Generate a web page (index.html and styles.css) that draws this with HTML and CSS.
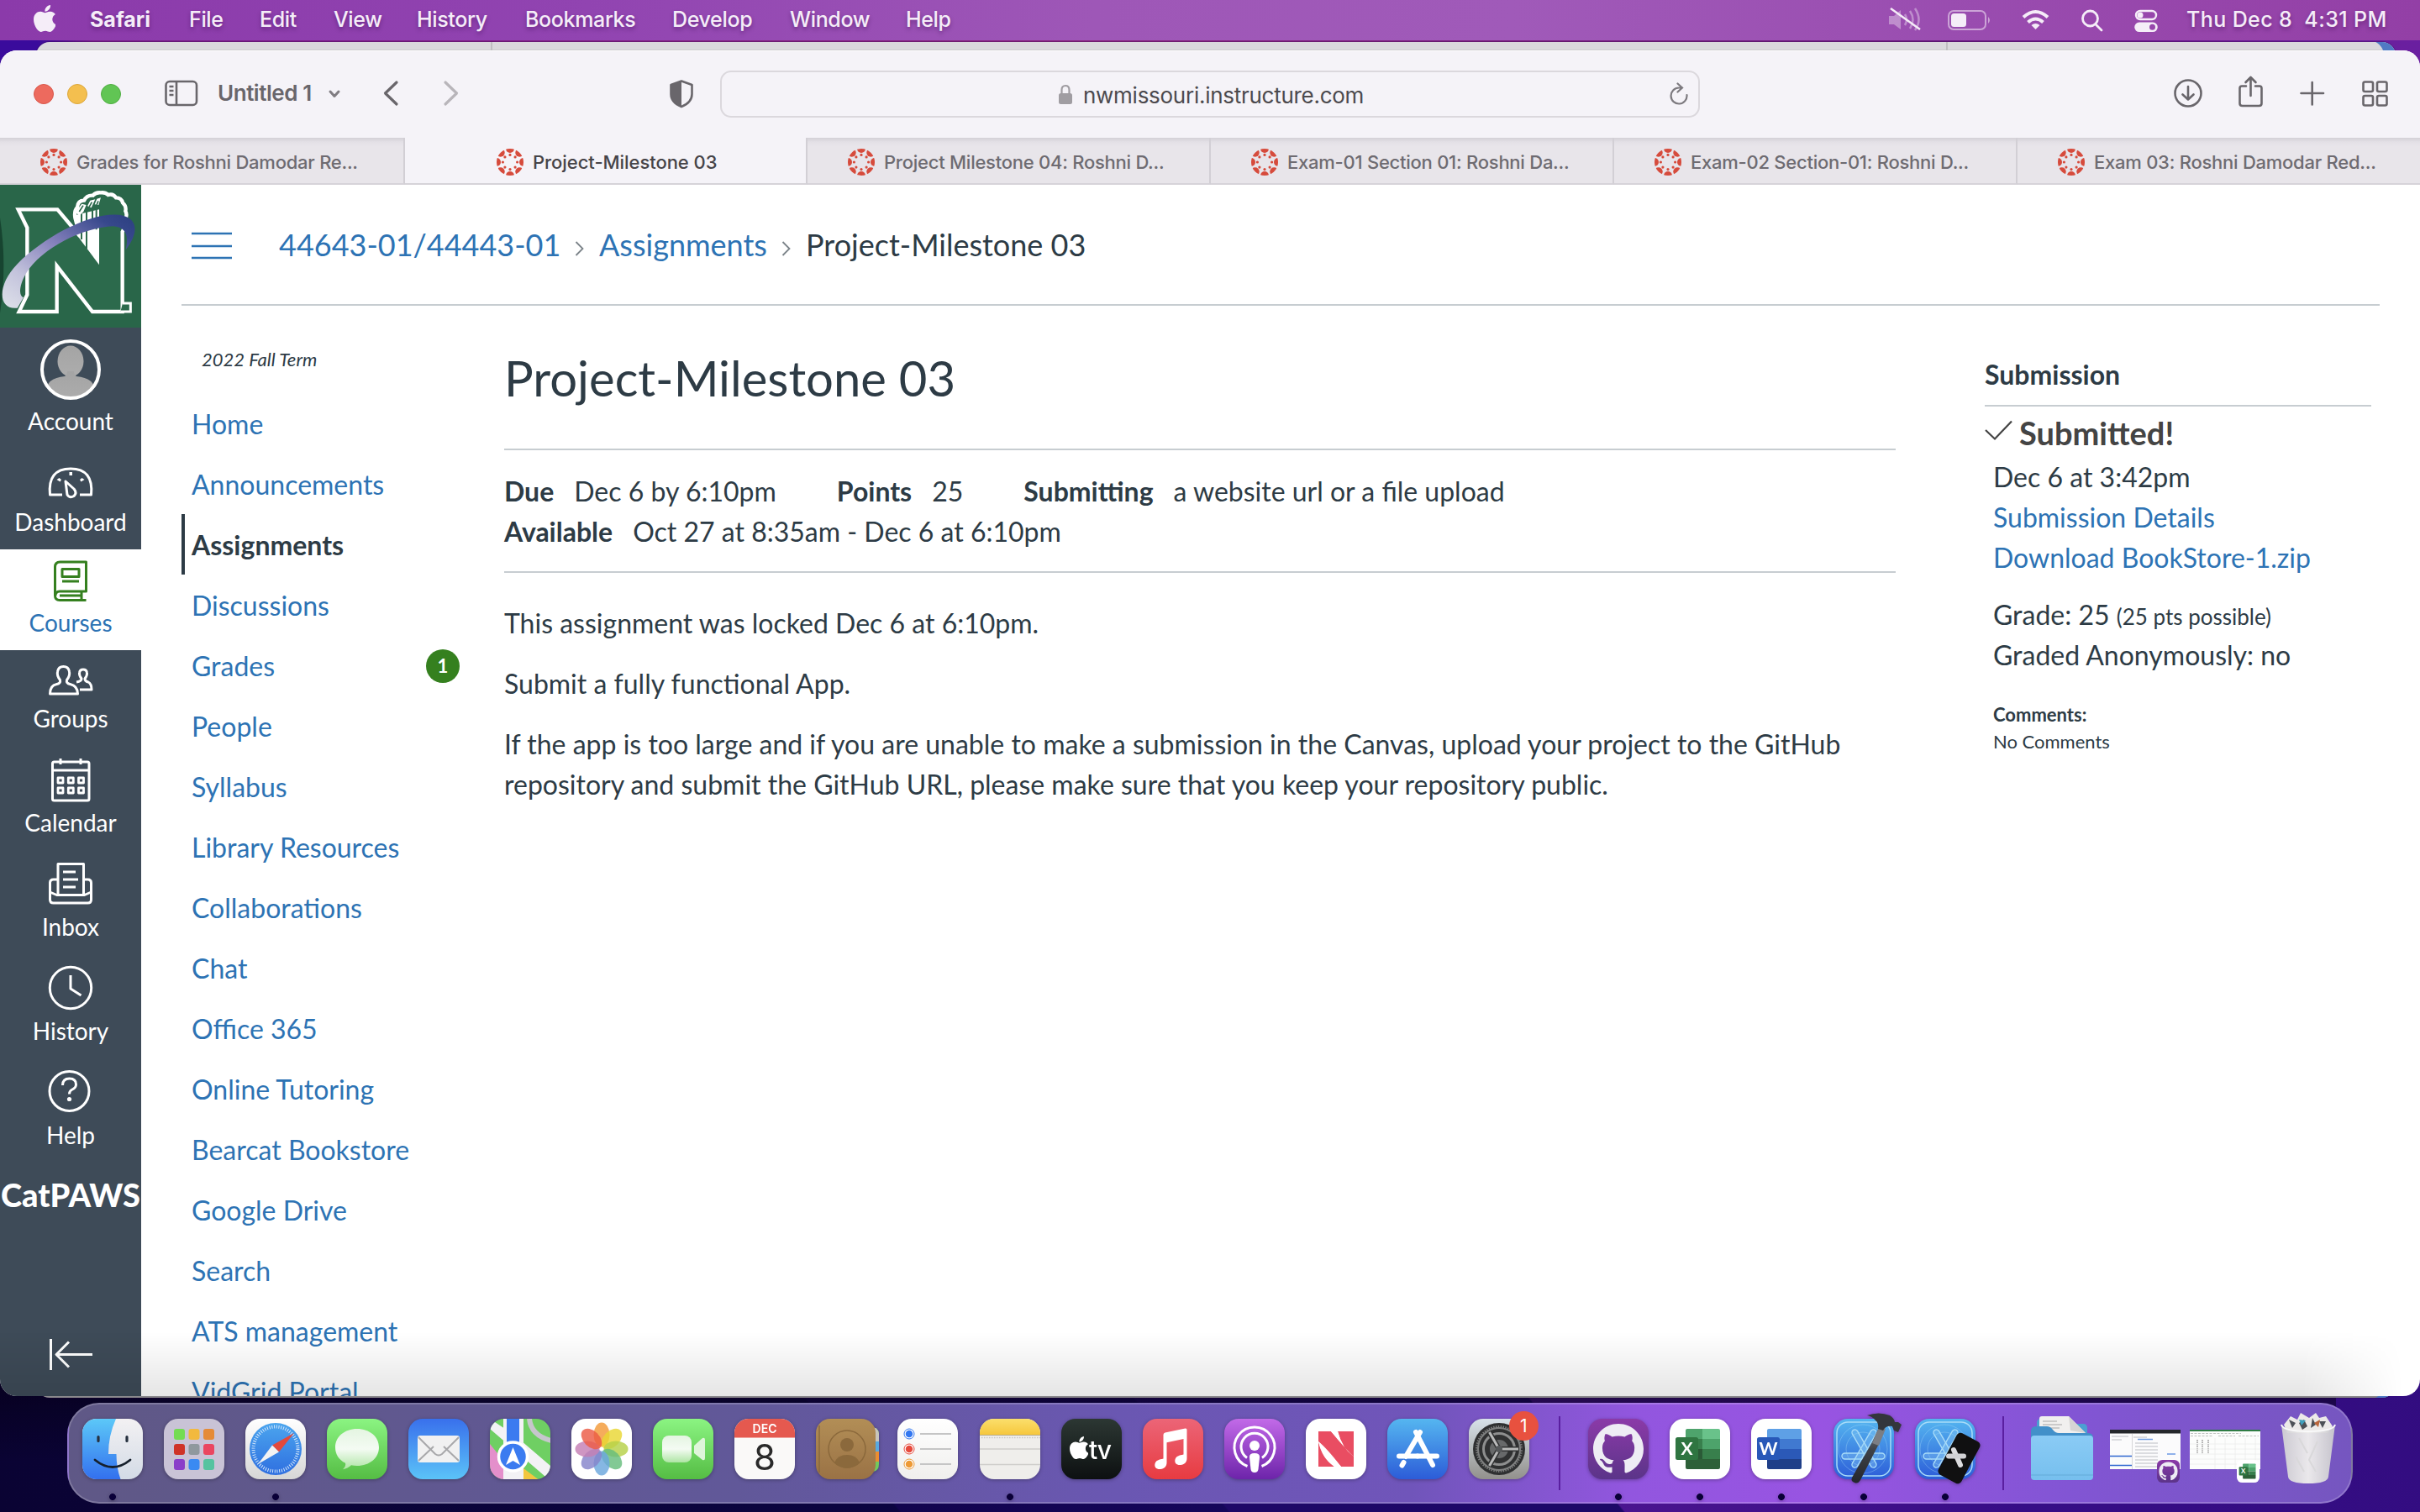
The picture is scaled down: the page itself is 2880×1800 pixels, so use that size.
FILE: index.html
```html
<!DOCTYPE html>
<html lang="en">
<head>
<meta charset="utf-8">
<title>Project-Milestone 03</title>
<link rel="stylesheet" href="styles.css">
</head>
<body>
<svg class="defs" width="0" height="0" aria-hidden="true">
  <defs>
    <linearGradient id="gSwoosh" x1="0" y1="1" x2="1" y2="0"><stop offset="0" stop-color="#dfe2ea"/><stop offset=".25" stop-color="#c3c3dc"/><stop offset=".55" stop-color="#8480bb"/><stop offset=".85" stop-color="#37488c"/><stop offset="1" stop-color="#2b3f80"/></linearGradient>
    <linearGradient id="gFinder" x2="0" y2="1"><stop offset="0" stop-color="#5cc8f8"/><stop offset="1" stop-color="#3370ee"/></linearGradient>
    <linearGradient id="gFinder2" x2="0" y2="1"><stop offset="0" stop-color="#f3f1f3"/><stop offset="1" stop-color="#d3dbe6"/></linearGradient>
    <linearGradient id="gWhite" x2="0" y2="1"><stop offset="0" stop-color="#fff"/><stop offset="1" stop-color="#d6d6d6"/></linearGradient>
    <linearGradient id="gPaper" x2="0" y2="1"><stop offset="0" stop-color="#fff"/><stop offset="1" stop-color="#f0efed"/></linearGradient>
    <linearGradient id="gSafari" x2="0" y2="1"><stop offset="0" stop-color="#4ba5ee"/><stop offset="1" stop-color="#2f6fe0"/></linearGradient>
    <linearGradient id="gGreen" x2="0" y2="1"><stop offset="0" stop-color="#8bf482"/><stop offset="1" stop-color="#55bd44"/></linearGradient>
    <linearGradient id="gBubble" x2="0" y2="1"><stop offset="0" stop-color="#e4f5e1"/><stop offset=".5" stop-color="#f4fbf3"/><stop offset="1" stop-color="#aee5a4"/></linearGradient>
    <linearGradient id="gMail" x2="0" y2="1"><stop offset="0" stop-color="#3970ec"/><stop offset="1" stop-color="#5bc3f8"/></linearGradient>
    <linearGradient id="gRed" x2="0" y2="1"><stop offset="0" stop-color="#ec6577"/><stop offset="1" stop-color="#e73b41"/></linearGradient>
    <linearGradient id="gPod" x2="0" y2="1"><stop offset="0" stop-color="#c26ae8"/><stop offset="1" stop-color="#6d24aa"/></linearGradient>
    <linearGradient id="gStore" x2="0" y2="1"><stop offset="0" stop-color="#55b6f0"/><stop offset="1" stop-color="#2c5cd8"/></linearGradient>
    <linearGradient id="gTv" x2="0" y2="1"><stop offset="0" stop-color="#2c3733"/><stop offset="1" stop-color="#0d1011"/></linearGradient>
    <linearGradient id="gContacts" x2="0" y2="1"><stop offset="0" stop-color="#b28e56"/><stop offset="1" stop-color="#9a7245"/></linearGradient>
    <linearGradient id="gYellow" x2="0" y2="1"><stop offset="0" stop-color="#fbdf6c"/><stop offset="1" stop-color="#f6c73d"/></linearGradient>
    <linearGradient id="gSettings" x2="0" y2="1"><stop offset="0" stop-color="#d8e2ea"/><stop offset="1" stop-color="#92908c"/></linearGradient>
    <linearGradient id="gGit" x2="0" y2="1"><stop offset="0" stop-color="#8b3aa8"/><stop offset="1" stop-color="#5b3489"/></linearGradient>
    <linearGradient id="gFolder" x2="0" y2="1"><stop offset="0" stop-color="#8acbf5"/><stop offset="1" stop-color="#76bfee"/></linearGradient>
    <linearGradient id="gTrash" x2="1" y2="0"><stop offset="0" stop-color="#cfced2"/><stop offset=".5" stop-color="#efeeed"/><stop offset="1" stop-color="#c9c8cd"/></linearGradient>
    <linearGradient id="gAvatar" x2="0" y2="1"><stop offset="0" stop-color="#a4a4a4"/><stop offset="1" stop-color="#adadad"/></linearGradient>
    <linearGradient id="gHandle" x2="0" y2="1"><stop offset="0" stop-color="#777a80"/><stop offset=".4" stop-color="#3f4248"/><stop offset="1" stop-color="#24262c"/></linearGradient>
    <clipPath id="cIcon"><rect width="72" height="72" rx="17"/></clipPath>
    <clipPath id="cFav"><circle cx="16" cy="16" r="16"/></clipPath>
    <clipPath id="cAvatar"><circle cx="84" cy="440" r="33"/></clipPath>
    <symbol id="favicon" viewBox="0 0 32 32">
      <g fill="#d64b3c" clip-path="url(#cFav)">
        <circle cx="16" cy="0" r="5"/><circle cx="16" cy="32" r="5"/><circle cx="0" cy="16" r="5"/><circle cx="32" cy="16" r="5"/>
        <circle cx="4.700" cy="4.700" r="5"/><circle cx="27.300" cy="4.700" r="5"/><circle cx="4.700" cy="27.300" r="5"/><circle cx="27.300" cy="27.300" r="5"/>
        <circle cx="16" cy="7.400" r="1.600"/><circle cx="16" cy="24.600" r="1.600"/><circle cx="7.400" cy="16" r="1.600"/><circle cx="24.600" cy="16" r="1.600"/>
        <circle cx="9.900" cy="9.900" r="1.600"/><circle cx="22.100" cy="9.900" r="1.600"/><circle cx="9.900" cy="22.100" r="1.600"/><circle cx="22.100" cy="22.100" r="1.600"/>
      </g>
    </symbol>
    <symbol id="apple" viewBox="4 32 366 448"><path d="M318.7 268.7c-.2-36.7 16.4-64.4 50-84.8-18.8-26.9-47.2-41.7-84.7-44.6-35.5-2.8-74.3 20.7-88.5 20.7-15 0-49.4-19.7-76.4-19.7C63.3 141.2 4 184.8 4 273.5q0 39.3 14.4 81.2c12.8 36.7 59 126.7 107.2 125.2 25.2-.6 43-17.9 75.8-17.9 31.8 0 48.3 17.9 76.4 17.9 48.6-.7 90.4-82.5 102.6-119.3-65.2-30.7-61.7-90-61.7-91.9zm-56.6-164.2c27.3-32.4 24.8-61.9 24-72.5-24.1 1.4-52 16.4-67.9 34.9-17.5 19.8-27.8 44.3-25.6 71.9 26.1 2 49.9-11.4 69.5-34.3z"/></symbol>
    <symbol id="octocat" viewBox="0 0 16 16"><path d="M8 0C3.58 0 0 3.58 0 8c0 3.54 2.29 6.53 5.47 7.59.4.07.55-.17.55-.38 0-.19-.01-.82-.01-1.49-2.01.37-2.53-.49-2.69-.94-.09-.23-.48-.94-.82-1.13-.28-.15-.68-.52-.01-.53.63-.01 1.08.58 1.23.82.72 1.21 1.87.87 2.33.66.07-.52.28-.87.51-1.07-1.78-.2-3.64-.89-3.64-3.95 0-.87.31-1.59.82-2.15-.08-.2-.36-1.02.08-2.12 0 0 .67-.21 2.2.82.64-.18 1.32-.27 2-.27s1.36.09 2 .27c1.53-1.04 2.2-.82 2.2-.82.44 1.1.16 1.92.08 2.12.51.56.82 1.27.82 2.15 0 3.07-1.87 3.75-3.65 3.95.29.25.54.73.54 1.48 0 1.07-.01 1.93-.01 2.2 0 .21.15.46.55.38A8.01 8.01 0 0 0 16 8c0-4.42-3.58-8-8-8z"/></symbol>
    <symbol id="github" viewBox="0 0 72 72"><rect width="72" height="72" rx="17" fill="url(#gGit)"/><use href="#octocat" x="6" y="6" width="60" height="60" fill="#eeecf4"/></symbol>
    <symbol id="excel" viewBox="0 0 72 72"><rect width="72" height="72" rx="17" fill="#fff"/><path d="M19 14q0-2 2-2h18v12H19z" fill="#4ea36c"/><path d="M39 12h19q2 0 2 2v10H39z" fill="#69c28a"/><path d="M19 24h20v12H19z" fill="#387f4c"/><path d="M39 24h21v12H39z" fill="#4da36b"/><path d="M19 36h20v12H19z" fill="#2b5a37"/><path d="M39 36h21v12H39z" fill="#387f4c"/><path d="M19 48h41v10q0 2-2 2H21q-2 0-2-2z" fill="#2d6038"/><rect x="7" y="22" width="27" height="27" rx="2.500" fill="#2f7541"/><text x="20.500" y="43" class="office-letter">X</text></symbol>
    <symbol id="bp" viewBox="0 0 72 72"><rect width="72" height="72" rx="17" fill="url(#gStore)"/><g fill="none" stroke="#a9dcf8"><rect x="4" y="4" width="64" height="64" rx="13" stroke-width="1.500"/><circle cx="35" cy="36" r="29" stroke-opacity=".35"/><circle cx="35" cy="36" r="20" stroke-opacity=".35"/><g stroke-width="1.400" fill="#8fcdf5" fill-opacity=".35"><rect x="10" y="41" width="51" height="7" rx="3.500"/><rect x="33" y="10" width="7" height="51" rx="3.500" transform="rotate(30 36.500 35.500)"/><rect x="33" y="10" width="7" height="51" rx="3.500" transform="rotate(-30 36.500 35.500)"/></g></g></symbol>
  </defs>
</svg>

<div class="desktop">
  <header class="menubar">
    <svg class="apple-logo" fill="#f5edf8"><use href="#apple"/></svg>
    <nav class="menus"><b>Safari</b><span>File</span><span>Edit</span><span>View</span><span>History</span><span>Bookmarks</span><span>Develop</span><span>Window</span><span>Help</span></nav>
    <svg class="status" viewBox="2240 0 340 48" width="340" height="48" fill="#f5edf8">
      <g opacity=".4"><path d="M2248 19h6l8-7v23l-8-6h-6z"/><path d="M2267 17q4 6.500 0 13M2273 13q7 10.500 0 21M2279 10q9 13.500 0 26" fill="none" stroke="#f5edf8" stroke-width="2.500"/></g>
      <path d="M2250 10l35 25" stroke="#f5edf8" stroke-width="2.500"/>
      <rect x="2319" y="13" width="44" height="22" rx="6" fill="none" stroke="#f5edf8" stroke-opacity=".55" stroke-width="2"/><rect x="2322" y="16" width="18" height="16" rx="3.500"/><path d="M2366 20q4 4 0 8z" opacity=".55"/>
      <path d="M2408 20.500q14.500-13 29 0M2413.500 26.500q9-8 18 0" fill="none" stroke="#f5edf8" stroke-width="4"/><path d="M2422.500 35l-5-5q5-4 10 0z"/>
      <g fill="none" stroke="#f5edf8" stroke-width="2.800"><circle cx="2487.500" cy="22" r="9"/><path d="M2494 29l7 7" stroke-linecap="round"/><rect x="2542" y="13" width="24" height="10" rx="5" stroke-width="2.400"/></g>
      <circle cx="2547" cy="18" r="3.500"/><path d="M2546 26.500h16a5.800 5.800 0 0 1 0 11.600h-16a5.800 5.800 0 0 1 0-11.600zm15.500 2.300a3.500 3.500 0 1 0 0 7 3.500 3.500 0 0 0 0-7z" fill-rule="evenodd"/>
    </svg>
    <span class="clock">Thu Dec 8&nbsp; 4:31 PM</span>
  </header>

  <div class="back-window"><i></i></div>

  <main class="window">
    <div class="toolbar">
      <div class="lights"><i></i><i></i><i></i></div>
      <svg class="tb-side" viewBox="196 95 40 32" width="40" height="32" fill="none" stroke="#69666b" stroke-width="2.600"><rect x="197.500" y="97" width="36.500" height="28" rx="4.500"/><path d="M210 97v28M201.500 103h5M201.500 108h5M201.500 113h5"/></svg>
      <span class="profile">Untitled 1</span>
      <svg class="tb-chev" viewBox="388 104 20 14" width="20" height="14" fill="none" stroke="#807d82" stroke-width="3" stroke-linecap="round" stroke-linejoin="round"><path d="M393 108l5 5.500 5-5.500"/></svg>
      <svg class="tb-nav" viewBox="456 95 92 32" width="92" height="32" fill="none" stroke-width="3.200" stroke-linecap="round" stroke-linejoin="round"><path d="M472 98l-13.500 13L472 124" stroke="#69666b"/><path d="M530 98l13.500 13L530 124" stroke="#b8b5ba"/></svg>
      <svg class="tb-shield" viewBox="796 94 30 36" width="30" height="36"><path d="M811 96.500l12.500 4.500v11q0 10-12.500 15-12.500-5-12.500-15v-11z" fill="none" stroke="#69666b" stroke-width="2.600" stroke-linejoin="round"/><path d="M811 96v31q-12.500-5-12.500-15v-11z" fill="#69666b"/></svg>
      <div class="address">
        <svg viewBox="1260 101 16 25" width="16" height="25"><rect x="1260" y="112" width="16" height="13" rx="2.500" fill="#a09da2"/><path d="M1263.500 113v-5q0-5 4.500-5t4.500 5v5" fill="none" stroke="#a09da2" stroke-width="2.200"/></svg>
        <span>nwmissouri.instructure.com</span>
        <svg class="reload" viewBox="1986 97 26 28" width="26" height="28" fill="none" stroke="#7d7a7f" stroke-width="2.200" stroke-linecap="round"><path d="M2007.500 112a9.500 9.500 0 1 1-9.500-8.500h3M1996.500 98.500l5.500 5-5.500 5"/></svg>
      </div>
      <svg class="tb-right" viewBox="2584 88 262 42" width="262" height="42" fill="none" stroke="#69666b" stroke-width="2.600" stroke-linecap="round" stroke-linejoin="round"><circle cx="2604" cy="111" r="15.500"/><path d="M2604 103v15M2597.500 112.500l6.500 6 6.500-6"/><path d="M2673 102.500h-5q-2.500 0-2.500 2.500v18q0 3 3 3h20q3 0 3-3v-18q0-2.500-2.500-2.500h-5M2678.500 114V92.500M2672.500 98l6-6 6 6"/><path d="M2738.500 111h26.500M2751.700 98v26.500"/><rect x="2812.500" y="97.500" width="11.500" height="11.500" rx="2"/><rect x="2829" y="97.500" width="11.500" height="11.500" rx="2"/><rect x="2812.500" y="114" width="11.500" height="11.500" rx="2"/><rect x="2829" y="114" width="11.500" height="11.500" rx="2"/></svg>
    </div>

    <div class="tabs">
      <div class="tab"><svg><use href="#favicon"/></svg><span>Grades for Roshni Damodar Re...</span></div>
      <div class="tab active"><svg><use href="#favicon"/></svg><span>Project-Milestone 03</span></div>
      <div class="tab"><svg><use href="#favicon"/></svg><span>Project Milestone 04: Roshni D...</span></div>
      <div class="tab"><svg><use href="#favicon"/></svg><span>Exam-01 Section 01: Roshni Da...</span></div>
      <div class="tab"><svg><use href="#favicon"/></svg><span>Exam-02 Section-01: Roshni D...</span></div>
      <div class="tab"><svg><use href="#favicon"/></svg><span>Exam 03: Roshni Damodar Red...</span></div>
    </div>

    <div class="page">
      <aside class="global-nav">
        <svg class="school" viewBox="0 12 504 510" width="168" height="170">
          <rect y="12" width="504" height="510" fill="#296649"/>
          <path d="M0 130q26 170 0 340z" fill="#174430"/>
          <path d="M285 195L268 130q-4-26 8-38 2-24 24-24 10-20 32-18 10-12 28-10 16-2 26 8 18-6 28 10 20 0 24 18 14 12 10 30 8 16-2 30 4 24-9 44V465H330L203 302v163H68l29-60V165L65 100h140z" fill="#2c6a4c" stroke="#fff" stroke-width="13" stroke-linejoin="miter"/>
          <path d="M430 465h36v-30h-28" fill="#2c6a4c" stroke="#fff" stroke-width="9"/>
          <path d="M270 185V120l84-20v198z" fill="#fff"/><path d="M291 112v95M309 106v134M330 100v70M344 96v76" stroke="#2c6a4c" stroke-width="6"/>
          <path d="M270 112l8-14 14-18 16 4-10 24-14 14zM312 88l10-20 18-4-14 30zM338 82l8-20 14-4-8 26z" fill="#fff"/><path d="M283 108l14-22M318 92l10-18M345 84l6-14" stroke="#2c6a4c" stroke-width="5"/>
          <path d="M62 452C-8 460-12 370 62 295 160 195 340 100 440 122 496 138 492 190 449 244 458 200 456 165 405 160 300 164 150 235 92 330 68 372 66 410 84 414z" fill="url(#gSwoosh)"/>
        </svg>
        <a class="item account"><svg viewBox="0 390 168 93"><g clip-path="url(#cAvatar)" fill="url(#gAvatar)"><ellipse cx="84" cy="430" rx="15.500" ry="18.500"/><path d="M55 466q0-16 22-18 3-2 3-6h8q0 4 3 6 22 2 22 18v12H55z"/></g><circle cx="84" cy="440" r="34" fill="none" stroke="#fff" stroke-width="4"/></svg><span>Account</span></a>
        <a class="item dash"><svg viewBox="0 534 168 69"><g class="line"><path d="M74 589H59.500q-3-31 24.500-31t24.500 31H95M78 573l10 9q4 5 0 8.500-5 3-8-1.500z"/></g><path d="M82.500 562h3.500v4h-3.500zM67.500 571l3-2 2.500 2-1.500 2.500zM100.500 571l-3-2-2.500 2 1.500 2.500z" fill="#fff"/></svg><span>Dashboard</span></a>
        <a class="item dash current"><svg viewBox="0 654 168 69"><g class="line green"><path d="M97 704V714M102.500 714.500H71q-5.500 0-5.500-5.500v-34q0-6 6-6h31v35H71q-5 0-5 5M71 709h26"/><path d="M74 677.500h20v9H74zM74 692h20" /></g></svg><span>Courses</span></a>
        <a class="item groups"><svg viewBox="0 774 168 63"><g class="line"><path d="M59.500 826q0-10 8-11.500 5-1 4-5-4-5-3-10 1-6 7-6t7 6q1 5-3 10-1 4 4 5 9 2 9 11.500z"/><path d="M91 812q6-1 6-4-3-4-2.500-7 .5-4 4.500-4t4.500 4q.5 3-2.500 7 0 3 4 4 4 2 4 9H95"/></g></svg><span>Groups</span></a>
        <a class="item tall"><svg viewBox="0 888 168 73"><g class="line"><rect x="62.500" y="907" width="43.500" height="46" rx="2"/><path d="M62 917h44M72 903v7M96 903v7" /><g stroke-width="2.800"><path d="M69 926h6v6h-6zM81.300 926h6v6h-6zM93.500 926h6v6h-6zM69 938h6v6h-6zM81.300 938h6v6h-6zM93.500 938h6v6h-6z"/></g></g></svg><span>Calendar</span></a>
        <a class="item tall"><svg viewBox="0 1012 168 73"><g class="line"><path d="M68.500 1047h-5q-4 0-4 4v20q0 4 4 4h41q4 0 4-4v-20q0-4-4-4h-5M69 1065v-36.500h30.500V1065M59.500 1062l8 3.500h33l8-3.500M75 1038h15M75 1047h18M75 1056h15"/></g></svg><span>Inbox</span></a>
        <a class="item tall"><svg viewBox="0 1136 168 73"><g class="line"><circle cx="84" cy="1176" r="24.700"/><path d="M84 1161v16l12.500 8"/></g></svg><span>History</span></a>
        <a class="item tall"><svg viewBox="0 1260 168 73"><g class="line"><circle cx="82.500" cy="1299" r="23.500"/><path d="M74.500 1292q0-8 8-8t8 7q0 4-4.500 6-3.500 1.500-3.500 5.500"/></g><circle cx="82.500" cy="1308.500" r="2.600" fill="#fff"/></svg><span>Help</span></a>
        <svg class="catpaws" viewBox="0 1384 168 80" width="168" height="80"><text x="1" y="1437" textLength="166" lengthAdjust="spacingAndGlyphs">CatPAWS</text></svg>
        <svg class="collapse" viewBox="0 1580 168 82" width="168" height="82"><g class="line"><path d="M60.500 1594v37M110 1612.500H67M82 1597.500l-15 15 15 15"/></g></svg>
      </aside>

      <section class="content">
        <div class="crumbs">
          <svg viewBox="228 269 48 44" width="48" height="44" stroke="#2d73b4" stroke-width="2.600"><path d="M228 278h48M228 293h48M228 307h48"/></svg>
          <a class="c1">44643-01/44443-01</a><svg class="sep" viewBox="0 0 12 18" width="12" height="18"><path d="M1.500 1l8 8-8 8"/></svg>
          <a class="c2">Assignments</a><svg class="sep" viewBox="0 0 12 18" width="12" height="18"><path d="M1.500 1l8 8-8 8"/></svg>
          <span class="c3">Project-Milestone 03</span>
        </div>
        <div class="columns">
          <nav class="course-nav">
            <p>2022 Fall Term</p>
            <a>Home</a><a>Announcements</a><a class="on">Assignments</a><a>Discussions</a><a>Grades<em>1</em></a><a>People</a><a>Syllabus</a><a>Library Resources</a><a>Collaborations</a><a>Chat</a><a>Office 365</a><a>Online Tutoring</a><a>Bearcat Bookstore</a><a>Google Drive</a><a>Search</a><a>ATS management</a><a>VidGrid Portal</a>
          </nav>
          <article class="assignment">
            <h1>Project-Milestone 03</h1>
            <div class="meta">
              <div><b>Due</b><span>Dec 6 by 6:10pm</span><b>Points</b><span>25</span><b>Submitting</b><span>a website url or a file upload</span></div>
              <div><b>Available</b><span>Oct 27 at 8:35am - Dec 6 at 6:10pm</span></div>
            </div>
            <p>This assignment was locked Dec 6 at 6:10pm.</p>
            <p>Submit a fully functional App.</p>
            <p>If the app is too large and if you are unable to make a submission in the Canvas, upload your project to the GitHub<br>repository and submit the GitHub URL, please make sure that you keep your repository public.</p>
          </article>
          <aside class="submission">
            <h2>Submission</h2>
            <div class="done"><svg viewBox="2362 498 34 28" width="34" height="28"><path d="M2363 512l11 10.500 20-21" fill="none" stroke="#444" stroke-width="2.200"/></svg>Submitted!</div>
            <div class="lines"><span>Dec 6 at 3:42pm</span><a>Submission Details</a><a>Download BookStore-1.zip</a></div>
            <div class="lines grade"><span>Grade: 25 <small>(25 pts possible)</small></span><span>Graded Anonymously: no</span></div>
            <div class="comments"><b>Comments:</b><span>No Comments</span></div>
          </aside>
        </div>
      </section>
    </div>
  </main>

  <footer class="dock">
    <svg class="ic run" viewBox="0 0 72 72"><g clip-path="url(#cIcon)"><rect width="72" height="72" fill="url(#gFinder2)"/><path d="M0 0h40q-9 20-9 42h9.500q0 16 5 30H0z" fill="url(#gFinder)"/></g><path d="M19 21.500v5M53 21.500v5" stroke="#26313f" stroke-width="3.200" stroke-linecap="round"/><path d="M15 49q21 17 42 0" fill="none" stroke="#16202c" stroke-width="2.800" stroke-linecap="round"/></svg>
    <svg class="ic" viewBox="0 0 72 72"><rect width="72" height="72" rx="17" fill="#c9c3d6"/><g><rect x="12" y="12" width="13" height="13" rx="3" fill="#74dc53"/><rect x="29.500" y="12" width="13" height="13" rx="3" fill="#f2b93e"/><rect x="47" y="12" width="13" height="13" rx="3" fill="#e58b37"/><rect x="12" y="30" width="13" height="13" rx="3" fill="#cf3328"/><rect x="29.500" y="30" width="13" height="13" rx="3" fill="#8f989e"/><rect x="47" y="30" width="13" height="13" rx="3" fill="#ea4660"/><rect x="12" y="48" width="13" height="13" rx="3" fill="#8a3ec9"/><rect x="29.500" y="48" width="13" height="13" rx="3" fill="#3a8af2"/><rect x="47" y="48" width="13" height="13" rx="3" fill="#55c3a0"/></g></svg>
    <svg class="ic run" viewBox="0 0 72 72"><rect width="72" height="72" rx="17" fill="url(#gWhite)"/><circle cx="36" cy="36" r="31" fill="url(#gSafari)"/><circle cx="36" cy="36" r="26.500" fill="none" stroke="#d5e8fb" stroke-width="4" stroke-dasharray="1 1.775"/><path d="M58 17L32 31.500l8 8z" fill="#e3493c"/><path d="M15 54l17-22.500 8 8z" fill="#f3f3f3"/></svg>
    <svg class="ic" viewBox="0 0 72 72"><rect width="72" height="72" rx="17" fill="url(#gGreen)"/><path d="M36 12c15 0 26 9.500 26 22S51 56 36 56q-4 0-7-.8-4 4-10 5 4-4 3-7.500C14 49 10 42 10 34c0-12.500 11-22 26-22z" fill="url(#gBubble)"/></svg>
    <svg class="ic" viewBox="0 0 72 72"><rect width="72" height="72" rx="17" fill="url(#gMail)"/><rect x="11" y="20" width="50" height="32" rx="3" fill="#f1f1f1"/><path d="M12 50l18-17M60 50L42 33M12 22l20 20q4 3 8 0l20-20" fill="none" stroke="#a8a8aa" stroke-width="2"/></svg>
    <svg class="ic" viewBox="0 0 72 72"><g clip-path="url(#cIcon)"><rect width="72" height="72" fill="#6fcf63"/><path d="M0 12l72 62v-18L30 20 0 0z" fill="#f3f2f5"/><path d="M0 30l34 42H0z" fill="#e48fcb"/><path d="M36 56l24 18H34z" fill="#f3c63f"/><path d="M16 0h24v72H16z" fill="#f3f2f5"/><path d="M20 0h15v44H20z" fill="#3b7bf0"/><path d="M47 0q2 20 26 26" fill="none" stroke="#c6c6cc" stroke-width="6"/></g><circle cx="27.500" cy="45" r="17" fill="#3b7bf0" stroke="#fff" stroke-width="3.500"/><path d="M27.500 34l8.500 21-8.500-5-8.500 5z" fill="#fff"/></svg>
    <svg class="ic" viewBox="0 0 72 72"><rect width="72" height="72" rx="17" fill="#fff"/><g fill-opacity=".82"><ellipse cx="36" cy="19" rx="9.500" ry="14.500" fill="#f39a38"/><ellipse cx="36" cy="19" rx="9.500" ry="14.500" fill="#e9d733" transform="rotate(45 36 36)"/><ellipse cx="36" cy="19" rx="9.500" ry="14.500" fill="#b6d148" transform="rotate(90 36 36)"/><ellipse cx="36" cy="19" rx="9.500" ry="14.500" fill="#67bd7c" transform="rotate(135 36 36)"/><ellipse cx="36" cy="19" rx="9.500" ry="14.500" fill="#6ba7dd" transform="rotate(180 36 36)"/><ellipse cx="36" cy="19" rx="9.500" ry="14.500" fill="#8584cb" transform="rotate(225 36 36)"/><ellipse cx="36" cy="19" rx="9.500" ry="14.500" fill="#c47fb5" transform="rotate(270 36 36)"/><ellipse cx="36" cy="19" rx="9.500" ry="14.500" fill="#ec5b45" transform="rotate(315 36 36)"/></g></svg>
    <svg class="ic" viewBox="0 0 72 72"><rect width="72" height="72" rx="17" fill="url(#gGreen)"/><rect x="11" y="20" width="35" height="32" rx="8" fill="url(#gBubble)"/><path d="M49 32l10-9q3-1 3 2v22q0 3-3 2l-10-8z" fill="#dff5da"/></svg>
    <svg class="ic" viewBox="0 0 72 72"><g clip-path="url(#cIcon)"><rect width="72" height="72" fill="#faf9f8"/><rect width="72" height="22.500" fill="#e5594f"/></g><text x="36" y="17" class="cal-month">DEC</text><text x="36" y="61" class="cal-day">8</text></svg>
    <svg class="ic" viewBox="0 0 72 72"><path d="M68 10q7 2 7 8v36q0 8-7 9z" fill="#72c95e"/><path d="M68 10q7 2 7 8v9h-7z" fill="#c9c5bd"/><path d="M68 27h7v12h-7z" fill="#58a9e0"/><path d="M68 39h7v12h-7z" fill="#ea8d31"/><rect width="71" height="72" rx="17" fill="url(#gContacts)"/><path d="M4 8v56" stroke="#8a6a3c" stroke-width="1.500"/><g fill="#8b693c"><circle cx="37" cy="36" r="22" fill="none" stroke="#8b693c" stroke-width="1.500"/><circle cx="37" cy="31" r="8"/><path d="M22 52q4-9 15-9t15 9q-15 14-30 0z"/></g></svg>
    <svg class="ic" viewBox="0 0 72 72"><rect width="72" height="72" rx="17" fill="url(#gPaper)"/><g stroke="#fff" stroke-width="1.500"><circle cx="14" cy="18" r="5" fill="#3377f0"/><circle cx="14" cy="36" r="5" fill="#e64a3c"/><circle cx="14" cy="54" r="5" fill="#ed9a37"/></g><g fill="none"><circle cx="14" cy="18" r="6" stroke="#3377f0" stroke-width="1"/><circle cx="14" cy="36" r="6" stroke="#e64a3c" stroke-width="1"/><circle cx="14" cy="54" r="6" stroke="#ed9a37" stroke-width="1"/><path d="M27 18h37M27 36h37M27 54h37" stroke="#c5c5c5" stroke-width="1.800"/></g></svg>
    <svg class="ic run" viewBox="0 0 72 72"><g clip-path="url(#cIcon)"><rect width="72" height="72" fill="#efeeeb"/><rect width="72" height="19" fill="url(#gYellow)"/><path d="M0 19.500h72" stroke="#b5a987" stroke-width="1"/><path d="M2 22.500h70" stroke="#c8c6c2" stroke-width="1.500" stroke-dasharray="1.500 1.500"/><path d="M0 36h72M0 54.500h72" stroke="#cfcecb" stroke-width="1.500"/></g></svg>
    <svg class="ic" viewBox="0 0 72 72"><rect width="72" height="72" rx="17" fill="url(#gTv)"/><use href="#apple" x="10" y="21" width="22" height="27" fill="#fff"/><text x="33" y="47.500" class="tv">tv</text></svg>
    <svg class="ic" viewBox="0 0 72 72"><rect width="72" height="72" rx="17" fill="url(#gRed)"/><path d="M24.500 19q0-2 2-2.500l24-5q2-.3 2 1.500v34c0 5-3 7.500-7.500 8-5 .3-7.500-2.500-6.500-6.500 1-4 5-5 10-6V24l-20 4.200V52c0 5-3 7.500-7.500 8-5 .3-7.500-2.500-6.500-6.500 1-4 5-5 10-6z" fill="#fff"/></svg>
    <svg class="ic" viewBox="0 0 72 72"><rect width="72" height="72" rx="17" fill="url(#gPod)"/><g fill="none" stroke="#fff" stroke-width="3"><path d="M27.500 56.500A24 24 0 1 1 44.500 56.500"/><path d="M27 46.500A16 16 0 1 1 45 46.500"/></g><circle cx="36" cy="32" r="6" fill="#fff"/><path d="M36 41q6.500 0 6 5l-1.500 14q-.5 4-4.500 4t-4.500-4L30 46q-.5-5 6-5z" fill="#fff"/></svg>
    <svg class="ic" viewBox="0 0 72 72"><rect width="72" height="72" rx="17" fill="#fff"/><path d="M15 15h15l27 30v12H42L15 27z" fill="#e94d62"/><path d="M15 27q4 20 19 30H15zM57 45q-14-10-19-30h19z" fill="#e94d62"/><path d="M15 27q10 8 27 30h-8Q20 47 15 27zM57 45Q47 36 30 15h8q5 20 19 30z" fill="#fff"/></svg>
    <svg class="ic" viewBox="0 0 72 72"><rect width="72" height="72" rx="17" fill="url(#gStore)"/><g stroke="#fff" stroke-width="6" stroke-linecap="round"><path d="M34 16l20 39M39 16L22 45M14 44.500h22M50 44.500h9M19.500 52l-2 3.500"/><path d="M36 44.500h12"/></g></svg>
    <div class="ic-wrap"><svg class="ic" viewBox="0 0 72 72"><rect width="72" height="72" rx="17" fill="url(#gSettings)"/><circle cx="36" cy="36" r="31" fill="#2f3031"/><circle cx="36" cy="36" r="28" fill="#7d7e7e"/><circle cx="36" cy="36" r="28" fill="none" stroke="#2f3031" stroke-width="4" stroke-dasharray="1.500 1.500"/><circle cx="36" cy="36" r="22" fill="#8d8e8e" stroke="#2f3031" stroke-width="4"/><circle cx="36" cy="36" r="14" fill="#67696a" stroke="#303132" stroke-width="6"/><path d="M36 36h22M36 36L25 17M36 36L25 55" stroke="#2f3031" stroke-width="6"/><path d="M36 36h23M36 36L24.500 16M36 36L24.500 56" stroke="#b9baba" stroke-width="3"/><circle cx="36" cy="36" r="4" fill="#55585a"/></svg><span class="count">1</span></div>
    <i class="rule"></i>
    <svg class="ic run" viewBox="0 0 72 72"><use href="#github" width="72" height="72"/></svg>
    <svg class="ic run" viewBox="0 0 72 72"><use href="#excel" width="72" height="72"/></svg>
    <svg class="ic run" viewBox="0 0 72 72"><rect width="72" height="72" rx="17" fill="#fff"/><path d="M19 14q0-2 2-2h37q2 0 2 2v10H19z" fill="#5ea0e6"/><path d="M19 24h41v12H19z" fill="#4079d0"/><path d="M19 36h41v12H19z" fill="#2b59b7"/><path d="M19 48h41v10q0 2-2 2H21q-2 0-2-2z" fill="#1f3f88"/><rect x="7" y="22" width="27" height="27" rx="2.500" fill="#2858b8"/><text x="20.500" y="43" class="office-letter">W</text></svg>
    <svg class="ic run" viewBox="0 0 72 72"><use href="#bp" width="72" height="72"/><path d="M58 10L54 30 32 73q-3 5-7 3-5-2-3-6L46 28 54 10z" fill="url(#gHandle)"/><path d="M46 29l9-20 7 3-8 20z" fill="#7b7e84"/><path d="M40-4q14-5 27 0 5 3 6 8h4l4 3-4 9-5-2-2-5q-8-1-11 5l-6-2q1-7-3-10-4-5-10-6z" fill="#33363b"/></svg>
    <svg class="ic run" viewBox="0 0 72 72"><use href="#bp" width="72" height="72"/><rect x="37" y="19" width="31" height="56" rx="5" fill="#101011" transform="rotate(28 52.500 47)"/><path d="M46 37l8 18" stroke="#dcdcdf" stroke-width="6" stroke-linecap="round"/><path d="M40 44.500h18" stroke="#d2d2d5" stroke-width="6" stroke-linecap="round"/></svg>
    <i class="rule second"></i>
    <svg class="folder" viewBox="0 0 76 76" width="76" height="76"><path d="M8 8q0-5 5-5h15l5 6h30q5 0 5 5v20H8z" fill="#4b9fd2"/><path d="M11 3q0-3 3-3h32l20 20v10H11z" fill="#f1f0ef"/><path d="M46 0l2 17 18 3z" fill="#d6d5d4"/><path d="M15 6h17M15 10h23M15 14h20" stroke="#a5a5a5" stroke-width="1"/><path d="M1 18q0-6 6-6h13q4 0 7 4t7 4h35q6 0 6 6v10H1z" fill="#4290c9"/><rect x="1" y="23" width="74" height="53" rx="4" fill="url(#gFolder)"/><path d="M1 70h74" stroke="#62a9d8" stroke-width="1.200"/></svg>
    <svg class="thumb" viewBox="0 0 84 64" width="84" height="64"><rect width="84" height="47" fill="#fbfbfc"/><rect width="84" height="4.500" fill="#24272b"/><path d="M0 31.500h26M0 42.500h26" stroke="#2f66d0" stroke-width="1.600"/><path d="M26.500 5v42" stroke="#d6d6d8"/><path d="M2 8h20M2 12h12M28 9h16M30 16h27M30 20h27M30 24h27M30 28h27M30 32h27M30 36h27M30 40h27M30 44h27" stroke="#bcbec3" stroke-width="1"/><path d="M33 11.500h18M68 29h10" stroke="#6d9be3" stroke-width="1.500"/><use href="#github" x="56" y="36" width="27" height="27"/></svg>
    <svg class="thumb two" viewBox="0 0 84 64" width="84" height="64"><rect width="84" height="47" fill="#fcfdfc"/><rect width="84" height="2" fill="#2f7d44"/><path d="M1 4.500h60M1 7.500h26M34 7.500h20M58 7.500h24" stroke="#bfc3c0" stroke-width="1.200" stroke-dasharray="3 1.500"/><path d="M9 12v16M15 12v16M22 12v16" stroke="#777" stroke-width="1.200" stroke-dasharray="1.500 1"/><path d="M0 17h84M0 23h84M0 29h84M0 35h84M0 41h84M30 10v37M42 10v37M54 10v37M66 10v37M78 10v37" stroke="#ececec" stroke-width=".8"/><use href="#excel" x="56" y="36" width="27" height="27"/></svg>
    <svg class="trash" viewBox="0 0 66 84" width="66" height="84"><path d="M4 14L12 4l8 4L24 0l10 6 8-6 4 6 8-2 8 12-6 8H8z" fill="#eceae8"/><path d="M10 8l8 4-4 6zM22 12l6-4 4 8-6 4zM38 6l4 8-6 4zM46 10l8 0-4 8z" fill="#4d5156"/><path d="M22 8l8 1-5 6z" fill="#3fa0bd"/><path d="M40 12l7-4-2 9z" fill="#b9663b"/><path d="M1 14q1 8 32 8t32-8l-8 62q-1 8-24 8T9 76z" fill="url(#gTrash)" fill-opacity=".96"/><path d="M1 14q2 8 32 8t32-8" fill="none" stroke="#f9f9fa" stroke-width="2"/><path d="M22 30l10 18M44 34l-10 22 8 14M18 52l10 18" stroke="#d9d8da" stroke-width="2" fill="none"/></svg>
  </footer>
</div>
</body>
</html>
```
FILE: styles.css
```css
* { box-sizing: border-box; }
body { margin: 0; font-family: Lato, "Liberation Sans", sans-serif; }
svg { display: block; flex: none; }
p, h1, h2 { margin: 0; }
.defs { position: absolute; }

.desktop {
  position: relative;
  width: 2880px;
  height: 1800px;
  overflow: hidden;
  display: flex;
  flex-direction: column;
  background:
    linear-gradient(90deg, #3a0b9c 0, #3a0b9c 44px, #7a1e8c 110px, #8a2680 1300px, #6d1e82 2300px, #6a1fa0 2880px) 0 0 / 100% 90px no-repeat,
    linear-gradient(180deg, rgba(6, 0, 24, .75) 0, rgba(6, 0, 24, 0) 100px) 0 1640px / 2780px 100px no-repeat,
    linear-gradient(50deg, #0a0333 0, #0b0440 820px, #12044e 822px, #15065a 1120px, #1e0867 1122px, #1d0868 1480px, #4a148f 1482px, #360d86 1850px, #2a0b72 100%);
}

/* Menu bar */
.menubar {
  height: 48px;
  flex: none;
  display: flex;
  align-items: flex-start;
  padding-left: 40px;
  background: linear-gradient(90deg, #8b3aaa 0, #9144b1 700px, #9e57b7 1300px, #a05ab9 1800px, #933fa6 2880px);
  color: #f5edf8;
  font: 500 25px/46px Inter, "Liberation Sans", sans-serif;
  letter-spacing: -.35px;
  text-shadow: 0 3px 5px rgba(50, 0, 70, .4);
}
.apple-logo { width: 26px; height: 32px; margin: 6px 41px 0 0; }
.menus { display: grid; grid-template-columns: 118px 84px 88px 99px 129px 175px 140px 138px 101px; width: 1072px; flex: none; }
.menus b { font-weight: 700; letter-spacing: 0; }
.status { margin-left: 1061px; }
.clock { margin-left: 22px; white-space: nowrap; letter-spacing: .4px; }

/* Window stacked behind the browser */
.back-window {
  position: absolute;
  left: 43px;
  top: 50px;
  width: 2808px;
  height: 1614px;
  border-radius: 16px;
  background: linear-gradient(180deg, #dad8dc 0, #dad8dc 9px, #8a888c 12px);
  box-shadow: 0 0 0 1px rgba(40, 0, 60, .25), inset -16px 0 0 -2px #507ac4;
}
.back-window i {
  display: block;
  width: 1734px;
  height: 10px;
  margin-left: 541px;
  border: solid #c0bec2;
  border-width: 0 2px;
}

/* Browser window */
.window {
  position: relative;
  flex: none;
  height: 1602px;
  margin-top: 12px;
  border-radius: 20px;
  overflow: hidden;
  background: #fff;
  display: flex;
  flex-direction: column;
}
.window::after {
  content: "";
  position: absolute;
  inset: auto 0 0;
  height: 76px;
  background: linear-gradient(180deg, rgba(0, 0, 0, 0), rgba(0, 0, 0, .1));
  -webkit-mask: linear-gradient(90deg, #000 2740px, transparent 2860px);
  mask: linear-gradient(90deg, #000 2740px, transparent 2860px);
}
.toolbar {
  flex: none;
  height: 104px;
  display: flex;
  align-items: center;
  background: #f5f3f8;
  padding-left: 40px;
  box-shadow: inset 0 1px 0 #fff;
  font-family: Inter, "Liberation Sans", sans-serif;
}
.lights { display: flex; gap: 16px; width: 156px; }
.lights i { width: 24px; height: 24px; border-radius: 50%; background: #ed6a5e; border: 1px solid #d9574b; }
.lights i:nth-child(2) { background: #f4bf4f; border-color: #dca73b; }
.lights i:nth-child(3) { background: #61c554; border-color: #50ae43; }
.profile { width: 128px; margin-left: 23px; margin-right: 1px; font-size: 26px; font-weight: 600; letter-spacing: -.45px; color: #69666b; white-space: nowrap; margin-top: -3px; }
.tb-nav { margin-left: 48px; margin-top: -2px; }
.tb-side { margin-top: -2px; }
.tb-shield { margin-left: 248px; }
.address {
  flex: none;
  width: 1166px;
  height: 56px;
  margin-left: 31px;
  border: 2px solid #dbd8dd;
  border-radius: 13px;
  display: flex;
  align-items: center;
  padding-left: 401px;
  color: #4c4a4e;
  font-size: 26px;
  letter-spacing: -.27px;
}
.address span { margin-left: 13px; width: 697px; white-space: nowrap; padding-top: 2px; }
.tb-right { margin-left: 561px; margin-top: -6px; }

.tabs { flex: none; height: 56px; display: grid; grid-template-columns: 482px 479px 480px 480px 480px 479px; }
.tab {
  display: flex;
  align-items: center;
  padding: 4px 0 0 48px;
  background: linear-gradient(180deg, #d3d0d6 0, #e3e0e6 5px, #e8e5ea 10px);
  border-right: 2px solid #d2cfd5;
  border-bottom: 2px solid #d6d3d9;
  font: 450 22px/30px Inter, "Liberation Sans", sans-serif;
  letter-spacing: -.25px;
  color: #6e6b71;
  white-space: nowrap;
}
.tab svg { width: 32px; height: 32px; margin-right: 11px; }
.tab.active { background: #f5f3f8; color: #464448; padding-left: 109px; letter-spacing: -.05px; }
.tab:last-child { border-right: 0; }

/* Canvas global navigation */
.page { display: flex; height: 1442px; }
.global-nav { width: 168px; flex: none; background: #3e4b58; display: flex; flex-direction: column; }
.item { color: #fff; height: 124px; display: flex; flex-direction: column; align-items: center; }
.item svg { width: 168px; height: 73px; }
.item span { font-size: 28px; line-height: 36px; }
.item.account { height: 144px; }
.item.account svg { height: 93px; }
.item.dash { height: 120px; }
.item.dash svg { height: 69px; }
.item.groups { height: 114px; }
.item.groups svg { height: 63px; }
.item.current { background: #fff; color: #2d73b4; }
.line { fill: none; stroke: #fff; stroke-width: 3; stroke-linejoin: round; }
.line.green { stroke: #35801f; }
.catpaws text { font: 900 38px Lato, sans-serif; fill: #fff; }
.collapse { margin-top: auto; }

/* Page content */
.content { width: 2664px; padding-left: 48px; color: #2d3b45; font-size: 32px; line-height: 48px; }
.content a { color: #2d73b4; }
.crumbs {
  height: 144px;
  display: flex;
  padding: 49px 0 0 12px;
  border-bottom: 2px solid #c7cdd1;
  font-size: 36px;
  line-height: 44px;
  white-space: nowrap;
}
.crumbs .c1 { margin-left: 56px; width: 352px; }
.crumbs .c2 { margin-left: 17px; width: 199px; }
.crumbs .c3 { margin-left: 17px; }
.sep { margin-top: 18px; fill: none; stroke: #7b8389; stroke-width: 1.8; }
.crumbs .c2 + .sep { margin-left: 18px; }
.columns { display: flex; }
.course-nav { width: 384px; flex: none; }
.course-nav p { font-style: italic; font-size: 22px; line-height: 30px; padding: 49px 0 25px 24px; height: 104px; }
.course-nav a { display: flex; align-items: center; width: 336px; height: 72px; line-height: 72px; padding: 1px 0 0 8px; border-left: 4px solid transparent; white-space: nowrap; }
.course-nav a.on { border-color: #2d3b45; color: #2d3b45; font-weight: 700; }
.course-nav em { margin: 0 5px 0 auto; width: 40px; height: 40px; border-radius: 50%; background: #35801f; color: #fff; font: 700 22px/40px Lato, sans-serif; text-align: center; }

.assignment { width: 1656px; flex: none; }
.assignment h1 { font-size: 58px; line-height: 70px; font-weight: 400; padding: 51px 0 49px; }
.meta { border: solid #c7cdd1; border-width: 2px 0; height: 148px; padding-top: 25px; margin-bottom: 36px; white-space: nowrap; }
.meta span { margin: 0 72px 0 24px; }
.assignment p { margin-bottom: 24px; white-space: nowrap; }

.submission { width: 460px; margin-left: 106px; white-space: nowrap; }
.submission h2 { font-size: 32px; line-height: 48px; padding: 58px 0 12px; border-bottom: 2px solid #c7cdd1; }
.done { display: flex; margin: 7px 0 5px; color: #444; font-size: 38px; font-weight: 700; }
.done svg { margin: 7px 7px 0 0; }
.lines { display: flex; flex-direction: column; padding-left: 10px; }
.lines > * { height: 48px; }
.lines.grade { margin-top: 20px; }
.lines small { font-size: 26px; line-height: 1; }
.comments { display: flex; flex-direction: column; margin-top: 31px; padding-left: 10px; font-size: 22px; line-height: 32px; }

/* Dock */
.dock {
  position: relative;
  flex: none;
  width: 2720px;
  height: 120px;
  margin: 8px 0 0 80px;
  padding: 17px 0 0 16px;
  display: flex;
  align-items: flex-start;
  gap: 25.06px;
  border: 2px solid rgba(255, 255, 255, .2);
  border-radius: 38px;
  background: linear-gradient(95deg, #5f5886 0, #615899 800px, #6a57b2 1250px, #7055ba 1600px, #9256df 1860px, #9854e2 2080px, #8255d4 2380px, #7556bf 2720px);
}
.ic { width: 72px; height: 72px; overflow: visible; filter: drop-shadow(0 1px 2px rgba(0, 0, 0, .3)); }
.run { box-sizing: content-box; height: 72px; padding-bottom: 25px; background: radial-gradient(circle 4px at 36px 93px, #0a0038 3.600px, transparent 4.200px); }
.ic-wrap { position: relative; }
.count { position: absolute; left: 48px; top: -9px; width: 35px; height: 35px; border-radius: 50%; background: #e8513f; color: #fff; font: 400 21px/35px Inter, sans-serif; text-align: center; }
.rule { width: 2px; height: 88px; margin: -3px 8.5px 0 10px; background: #5a1fa0; flex: none; }
.rule.second { margin: -3px 7px 0 7px; }
.folder { margin: -3px 0 0 -1px; overflow: visible; }
.thumb { margin: 13px 0 0 -6px; overflow: visible; }
.thumb.two { margin-left: -14px; }
.trash { margin: -7px 0 0 -1px; }
.office-letter { font: 700 21px Lato, sans-serif; fill: #fff; text-anchor: middle; }
.cal-month { font: 600 14px Inter, sans-serif; fill: #fff; text-anchor: middle; }
.cal-day { font: 400 42px Inter, sans-serif; fill: #2a2a2a; text-anchor: middle; }
.tv { font: 500 30px Inter, sans-serif; fill: #fff; letter-spacing: -1px; }
```
